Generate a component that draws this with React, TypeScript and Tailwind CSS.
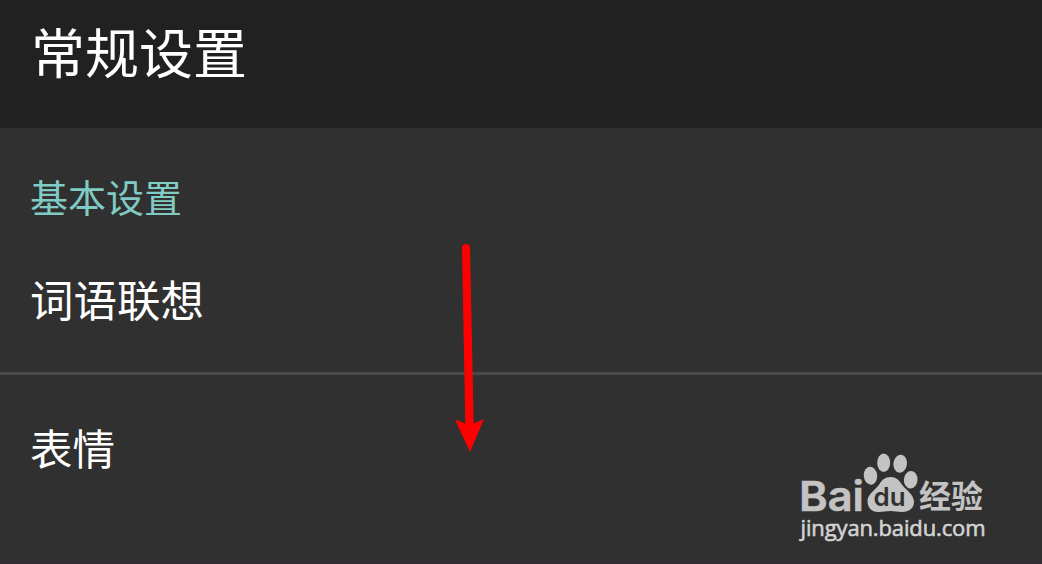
interface SettingRowProps {
  label: string;
  className?: string;
}

function SettingRow({ label, className = "" }: SettingRowProps) {
  return (
    <div className={`pl-[30px] leading-[60px] text-white ${className}`}>
      {label}
    </div>
  );
}

function Arrow() {
  return (
    <svg
      className="absolute left-[450px] top-[240px]"
      width="40"
      height="216"
      viewBox="450 240 40 216"
      fill="#ff0000"
    >
      <path d="M462 248a4 4 0 0 1 8 0L473.7 423.5L484 419L470 452L455 419.5L465.3 423.5Z" />
    </svg>
  );
}

function Watermark() {
  return (
    <svg
      className="absolute left-[790px] top-[445px]"
      width="210"
      height="105"
      viewBox="790 445 210 105"
      fill="#c3c3c3"
    >
      <text
        x="799"
        y="510.5"
        stroke="#c3c3c3"
        strokeWidth="0.6"
        fontFamily="Inter, 'Liberation Sans', sans-serif"
        fontSize="41"
        fontWeight="600"
        textLength="65"
        lengthAdjust="spacingAndGlyphs"
      >
        Bai
      </text>

      {/* Paw */}
      <ellipse cx="870.5" cy="475.7" rx="6.7" ry="9" transform="rotate(-6 870.5 475.7)" />
      <ellipse cx="883.7" cy="462.7" rx="6.5" ry="9.2" />
      <ellipse cx="900.2" cy="463.7" rx="6.8" ry="9" transform="rotate(8 900.2 463.7)" />
      <ellipse cx="910.7" cy="479.7" rx="6.8" ry="8.8" transform="rotate(4 910.7 479.7)" />
      <path d="M890.5 477C896 477 899 480 901.5 484C905 489.500 914 494 914 502C914 508 909 512 902 512C897 512 894 511 890.500 511C886 511 883 512 878.500 512C871 512 867.500 507 867.500 501C867.500 494 876 489.500 879.500 484C882 480 885 477 890.500 477Z" />
      <text
        x="873.5"
        y="506"
        fill="#303030"
        fontFamily="Inter, 'Liberation Sans', sans-serif"
        fontSize="25"
        fontWeight="600"
        textLength="32"
        lengthAdjust="spacingAndGlyphs"
      >
        du
      </text>

      <text
        x="919"
        y="508"
        fontFamily="'Noto Sans CJK SC', sans-serif"
        fontSize="32"
        fontWeight="700"
        textLength="64"
      >
        经验
      </text>
      <text
        x="800.5"
        y="535.5"
        fill="#d3d3d3"
        stroke="#d3d3d3"
        strokeWidth="0.6"
        fontFamily="'Open Sans', 'Noto Sans', sans-serif"
        fontSize="22"
        textLength="185"
      >
        jingyan.baidu.com
      </text>
    </svg>
  );
}

export default function App() {
  return (
    <div className="relative flex h-[564px] w-[1042px] flex-col overflow-hidden bg-[#303030] font-['Noto_Sans_CJK_SC',sans-serif]">
      <header className="h-32 shrink-0 bg-[#212121] pl-[31px] pt-[11px]">
        <h1 className="text-[54px] leading-[80px] text-white">常规设置</h1>
      </header>

      <main className="flex grow flex-col">
        <section className="h-[247px] shrink-0 border-b-[3px] border-[#4a4a4a] pt-[40px]">
          <h2 className="pl-[30px] text-[38px] leading-[56px] text-[#80cbc4]">基本设置</h2>
          <SettingRow label="词语联想" className="mt-[45px] text-[43.5px]" />
        </section>
        <section className="grow border-b-2 border-[#312a31] pt-[42px]">
          <SettingRow label="表情" className="text-[42.5px]" />
        </section>
      </main>

      <Arrow />
      <Watermark />
    </div>
  );
}
